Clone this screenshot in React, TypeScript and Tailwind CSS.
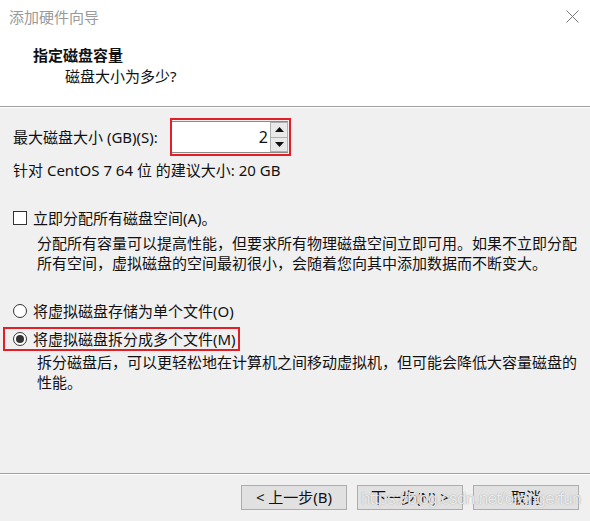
import React from 'react';

const FONT = { fontFamily: '"Noto Sans", "Noto Sans CJK SC", sans-serif' };

function Spin() {
  return (
    <div className="flex flex-col w-[18px] h-full">
      <div className="flex-1 flex items-center justify-center bg-[#e9e9e9] border border-[#b0b0b0]">
        <svg width="9" height="5" viewBox="0 0 9 5"><path d="M0 5 L4.5 0 L9 5 Z" fill="#111" /></svg>
      </div>
      <div className="flex-1 flex items-center justify-center bg-[#e9e9e9] border border-t-0 border-[#b0b0b0]">
        <svg width="9" height="5" viewBox="0 0 9 5"><path d="M0 0 L4.5 5 L9 0 Z" fill="#111" /></svg>
      </div>
    </div>
  );
}

function Btn({ children }: { children: React.ReactNode }) {
  return (
    <div className="w-[106px] h-[25px] flex items-center justify-center bg-[#e1e1e1] border border-[#adadad] text-[15px] text-[#111] whitespace-nowrap">
      {children}
    </div>
  );
}

export default function App() {
  return (
    <div className="w-[590px] h-[521px] flex flex-col bg-[#f0f0f0] text-[#111] overflow-hidden relative whitespace-nowrap" style={FONT}>
      {/* header */}
      <div className="h-[107px] bg-white border-b border-[#a0a0a0] relative shrink-0">
        <div className="absolute left-[9px] top-[6px] text-[15px] leading-[22px] text-[#9a9a9a]">添加硬件向导</div>
        <svg className="absolute left-[566px] top-[10px]" width="13" height="13" viewBox="0 0 13 13">
          <path d="M0.5 0.5 L12.5 12.5 M12.5 0.5 L0.5 12.5" stroke="#777" strokeWidth="1" />
        </svg>
        <div className="absolute left-[33px] top-[44px] text-[15px] leading-[22px] font-bold">指定磁盘容量</div>
        <div className="absolute left-[65px] top-[65px] text-[15px] leading-[22px]">磁盘大小为多少?</div>
      </div>
      <div className="h-px bg-white shrink-0" />

      {/* body */}
      <div className="flex-1 flex flex-col text-[15px] leading-[20px]">
        <div className="mt-[10px] ml-[13px] flex items-center h-[38px]">
          <div className="w-[157px]">最大磁盘大小 (GB)(S):</div>
          <div className="w-[121px] h-[38px] border-2 border-[#e41e26] py-[1px] pr-[1px]">
            <div className="h-full flex bg-white border-y border-[#8a8a8a]">
              <div className="flex-1 flex items-center justify-end pr-[2px] text-[16px]">2</div>
              <Spin />
            </div>
          </div>
        </div>
        <div className="mt-[4px] ml-[13px]">针对 CentOS 7 64 位 的建议大小: 20 GB</div>

        <div className="mt-[28px] ml-[13px] flex items-center h-[20px]">
          <div className="w-[14px] h-[14px] bg-white border border-[#333]" />
          <div className="ml-[6px]">立即分配所有磁盘空间(A)。</div>
        </div>
        <div className="mt-[5px] ml-[37px]">
          <div>分配所有容量可以提高性能，但要求所有物理磁盘空间立即可用。如果不立即分配</div>
          <div>所有空间，虚拟磁盘的空间最初很小，会随着您向其中添加数据而不断变大。</div>
        </div>

        <div className="mt-[28px] ml-[13px] flex items-center h-[20px]">
          <div className="w-[14px] h-[14px] rounded-full bg-white border border-[#333]" />
          <div className="ml-[6px]">将虚拟磁盘存储为单个文件(O)</div>
        </div>
        <div className="mt-[6px] ml-[3px] w-[237px] h-[24px] border-2 border-[#e41e26] flex items-center pl-[8px]">
          <div className="w-[14px] h-[14px] rounded-full bg-white border border-[#333] flex items-center justify-center">
            <div className="w-[8px] h-[8px] rounded-full bg-[#333]" />
          </div>
          <div className="ml-[6px]">将虚拟磁盘拆分成多个文件(M)</div>
        </div>
        <div className="mt-[1px] ml-[37px]">
          <div>拆分磁盘后，可以更轻松地在计算机之间移动虚拟机，但可能会降低大容量磁盘的</div>
          <div>性能。</div>
        </div>
      </div>

      {/* footer */}
      <div className="h-[48px] shrink-0 border-t border-[#a0a0a0] relative">
        <div className="h-px bg-white" />
        <div className="mt-[10px] flex justify-end gap-[10px] pr-[11px]">
          <Btn>&lt; 上一步(B)</Btn>
          <Btn>下一步(N) &gt;</Btn>
          <Btn>取消</Btn>
        </div>
        <div
          className="absolute left-[361px] top-[14px] text-[17px] leading-[22px] tracking-[-0.6px] text-white/80 pointer-events-none"
          style={{ fontFamily: '"Liberation Sans", Arial, sans-serif', textShadow: '0 0 1px #888' }}
        >
          https://blog.csdn.net/orangerfun
        </div>
      </div>
    </div>
  );
}
